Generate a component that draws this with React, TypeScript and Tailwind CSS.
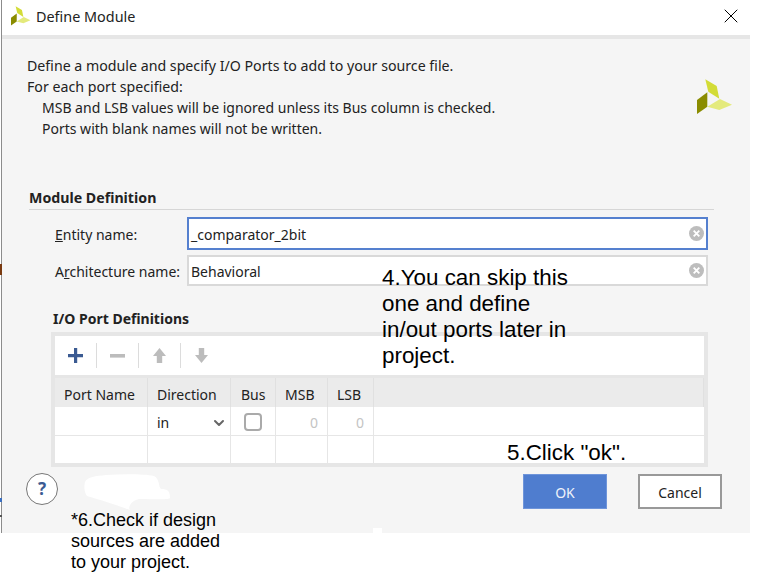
import type { ReactNode } from "react";
import { ChevronDown, X } from "lucide-react";

const ui = "font-['Noto_Sans','Open_Sans',sans-serif]";
const note = "font-['Liberation_Sans',Arial,sans-serif] text-black";

function Logo({ className = "" }: { className?: string }) {
  return (
    <svg viewBox="0 0 36 36" className={className}>
      <polygon points="8.3,0.3 19.7,7 22.3,19.7 11.3,12.7" fill="#d3dc37" />
      <polygon points="0,21 10.3,13.3 10.3,27.7 0,35" fill="#8a8c00" />
      <polygon points="10.3,27.7 23,20 35,25.7 22.3,31" fill="#e4ea7c" />
    </svg>
  );
}

function ClearIcon({ className = "" }: { className?: string }) {
  return (
    <svg viewBox="0 0 16 16" className={className}>
      <circle cx="8" cy="8" r="8" fill="#bdbdbd" />
      <path d="M5 5l6 6M11 5l-6 6" stroke="#fff" strokeWidth="2" />
    </svg>
  );
}

function TextRow({ label, value, focused }: { label: ReactNode; value: string; focused?: boolean }) {
  return (
    <div className={`flex items-center ${focused ? "h-[33px]" : "h-[31px]"} mb-[5px]`}>
      <div className="w-[160px] pl-[28px] pt-[2px] shrink-0 text-[14px] text-[#222] whitespace-nowrap">{label}</div>
      <div
        className={`flex-1 h-full bg-white flex items-center pl-[2px] pr-[2px] text-[14px] text-[#222] justify-between ${
          focused ? "border-[2.5px] border-[#5580cf]" : "border-[2.5px] border-[#d9d9d9]"
        }`}
      >
        <span className="pt-[2px]">{value}</span>
        <ClearIcon className="w-[15px] h-[15px]" />
      </div>
    </div>
  );
}

function Separator() {
  return <div className="w-px h-[25px] bg-[#dcdcdc]" />;
}

const cols = ["w-[93px]", "w-[83px]", "w-[45px]", "w-[52px]", "w-[46px]", "flex-1"];
const headers = ["Port Name", "Direction", "Bus", "MSB", "LSB", ""];
const headerPads = ["pl-[9px]", "pl-[9px]", "pl-[10px]", "pl-[9px]", "pl-[9px]", ""];

export default function App() {
  return (
    <div className={`relative w-[780px] h-[587px] bg-white overflow-hidden ${ui}`}>
      <div className="w-[749px] h-[533px] ml-px border-l border-[#8c8c8c] flex flex-col">
        {/* Title bar */}
        <div className="h-[35px] bg-white flex items-center pl-[9px] pr-[7px] shrink-0">
          <Logo className="w-[20px] h-[20px] mr-[5px] mb-[3px]" />
          <span className="text-[14.4px] text-[#222] flex-1 mb-[1px]">Define Module</span>
          <X className="w-[24px] h-[24px] text-black mb-[3px]" strokeWidth={1} />
        </div>
        <div className="h-[4px] bg-[#e6e6e6] shrink-0" />

        <div className="flex-1 bg-[#f5f5f5] flex flex-col pl-[25px] pr-[14px]">
          {/* Intro */}
          <div className="flex justify-between h-[137px] pt-[16px] pr-[3px] text-[14.2px] leading-[21px] text-[#222]">
            <div>
              <p>Define a module and specify I/O Ports to add to your source file.</p>
              <p>For each port specified:</p>
              <p className="pl-[15px] text-[14px]">MSB and LSB values will be ignored unless its Bus column is checked.</p>
              <p className="pl-[15px] text-[14px]">Ports with blank names will not be written.</p>
            </div>
            <Logo className="w-[36px] h-[36px] mt-[24px]" />
          </div>

          {/* Module definition */}
          <div className="ml-[2px] mr-[22px] border-b border-[#d6d6d6] text-[14.2px] font-bold text-[#222] h-[34px] pt-[12px] leading-[20px]">
            Module Definition
          </div>
          <div className="mt-[7px] mr-[28px]">
            <TextRow
              label={
                <>
                  <span className="underline">E</span>ntity name:
                </>
              }
              value="_comparator_2bit"
              focused
            />
            <TextRow
              label={
                <>
                  A<span className="underline">r</span>chitecture name:
                </>
              }
              value="Behavioral"
            />
          </div>

          {/* Ports */}
          <div className="pl-[26px] text-[14px] font-bold text-[#222] mt-[18px] h-[23px] leading-[20px]">
            I/O Port Definitions
          </div>
          <div className="ml-[24px] w-[657px] h-[135px] border-[4px] border-[#e6e6e6] bg-white flex flex-col">
            <div className="h-[39px] flex items-center pl-[13px] shrink-0">
              <svg viewBox="0 0 15 15" className="w-[15px] h-[15px] mr-[13px]">
                <path d="M6 0h3.2v6H15v3.2H9.2V15H6V9.2H0V6h6z" fill="#3b5b92" />
              </svg>
              <Separator />
              <svg viewBox="0 0 15 15" className="w-[15px] h-[15px] mx-[13px]">
                <rect x="0" y="6" width="15" height="3.6" fill="#bcbcbc" />
              </svg>
              <Separator />
              <svg viewBox="0 0 13 15" className="w-[13px] h-[15px] mx-[14px]">
                <path d="M6.5 0L13 8H9.2v7H3.8V8H0z" fill="#bcbcbc" />
              </svg>
              <Separator />
              <svg viewBox="0 0 13 15" className="w-[13px] h-[15px] ml-[14px]">
                <path d="M6.5 15L13 7H9.2V0H3.8v7H0z" fill="#bcbcbc" />
              </svg>
            </div>
            <div className="h-[3px] bg-[#e6e6e6] shrink-0" />
            <div className="flex h-[29px] bg-[#ebebeb] shrink-0 text-[14px] text-[#222]">
              {headers.map((h, i) => (
                <div key={i} className={`${cols[i]} ${headerPads[i]} pt-[3px] flex items-center border-r border-[#e0e0e0]`}>
                  {h}
                </div>
              ))}
            </div>
            <div className="flex h-[29px] border-b border-[#e6e6e6] shrink-0 text-[14px]">
              <div className={`${cols[0]} border-r border-[#e6e6e6]`} />
              <div className={`${cols[1]} border-r border-[#e6e6e6] pt-[3px] flex items-center justify-between pl-[9px] pr-[3px] text-[#222]`}>
                <span>in</span>
                <ChevronDown className="w-[16px] h-[16px] text-[#666]" strokeWidth={3} />
              </div>
              <div className={`${cols[2]} border-r border-[#e6e6e6] pt-[1px] flex items-center pl-[13px]`}>
                <div className="w-[18px] h-[18px] rounded-[4px] border-2 border-[#aaa] bg-white" />
              </div>
              <div className={`${cols[3]} border-r border-[#e6e6e6] pt-[3px] flex items-center justify-end pr-[9px] text-[#c4c4c4]`}>0</div>
              <div className={`${cols[4]} border-r border-[#e6e6e6] pt-[3px] flex items-center justify-end pr-[9px] text-[#c4c4c4]`}>0</div>
              <div className={cols[5]} />
            </div>
            <div className="flex flex-1">
              {cols.map((c, i) => (
                <div key={i} className={`${c} ${i < 5 ? "border-r border-[#e6e6e6]" : ""}`} />
              ))}
            </div>
          </div>

          {/* Footer */}
          <div className="flex items-start mt-[6px] pr-[14px] -ml-px">
            <div className="w-[32px] h-[32px] rounded-full border border-[#777] bg-white flex items-center justify-center text-[17px] font-bold text-[#3b5b92]">
              ?
            </div>
            <div className="flex-1" />
            <button className="w-[84px] h-[35px] mt-px pt-[2px] bg-[#4f7dcf] border border-[#6f95da] text-[14px] text-[#eef2fa]">OK</button>
            <button className="ml-[31px] w-[84px] h-[35px] mt-px pt-[2px] bg-white border-2 border-[#999] text-[14px] text-[#222]">Cancel</button>
          </div>
        </div>
      </div>

      {/* Marks of the window behind, along the left edge */}
      <div className="absolute left-0 top-[264px] w-[2px] h-[11px] bg-[#7a3a10]" />
      <div className="absolute left-0 top-[498px] w-[2px] h-[4px] bg-[#3a6fc0]" />
      <div className="absolute left-0 top-[515px] w-[2px] h-[2px] bg-[#555]" />

      {/* Paint-overs and annotations pasted over the dialog */}
      <svg viewBox="0 0 90 38" className="absolute left-[84px] top-[474px] w-[90px] h-[38px]">
        <path d="M1 8C3 3 12 2 22 1C40 0 60 0 70 2C76 5 74 12 77 15C84 15 86 17 86 24C86 26 70 25 55 25C46 27 44 34 46 36C30 30 10 24 3 22C0 18 0 12 1 8z" fill="#fff" />
      </svg>
      <div className="absolute left-[373px] top-[528px] w-[9px] h-[6px] bg-white" />
      <div className={`absolute left-[382px] top-[265px] w-[195px] text-[22.4px] leading-[26px] ${note}`}>
        4.You can skip this one and define in/out ports later in project.
      </div>
      <div className={`absolute left-[507px] top-[440px] text-[22.4px] leading-[26px] ${note}`}>5.Click "ok".</div>
      <div className={`absolute left-[71px] top-[510px] w-[160px] text-[18px] leading-[21px] ${note}`}>
        *6.Check if design sources are added to your project.
      </div>
    </div>
  );
}
